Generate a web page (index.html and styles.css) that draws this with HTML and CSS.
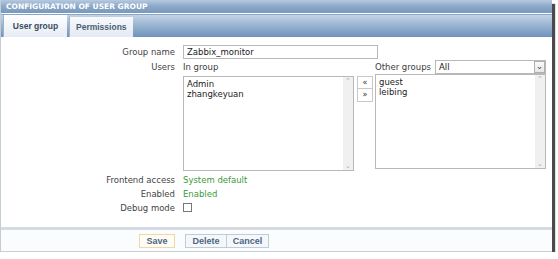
FILE: index.html
```html
<!DOCTYPE html>
<html lang="en">
<head>
    <meta charset="UTF-8">
    <title>Configuration of user group</title>
    <link rel="stylesheet" href="styles.css">
</head>
<body>
    <div class="window">
        <div class="title">CONFIGURATION OF USER GROUP</div>
        <div class="tabs">
            <div class="tab active">User group</div>
            <div class="tab">Permissions</div>
        </div>

        <div class="form">
            <div class="row">
                <div class="label">Group name</div>
                <div class="input">Zabbix_monitor</div>
            </div>

            <div class="row users-row">
                <div class="label">Users</div>
                <div class="users">
                    <div class="col">
                        <div class="col-head">In group</div>
                        <div class="listbox">
                            <div class="items">
                                <div>Admin</div>
                                <div>zhangkeyuan</div>
                            </div>
                            <div class="scroll"><span>&#8963;</span><span>&#8964;</span></div>
                        </div>
                    </div>
                    <div class="moves">
                        <div class="move">&laquo;</div>
                        <div class="move">&raquo;</div>
                    </div>
                    <div class="col">
                        <div class="col-head other">
                            <span>Other groups</span>
                            <div class="select">All<span class="arrow">&#8964;</span></div>
                        </div>
                        <div class="listbox">
                            <div class="items">
                                <div>guest</div>
                                <div>leibing</div>
                            </div>
                            <div class="scroll"><span>&#8963;</span><span>&#8964;</span></div>
                        </div>
                    </div>
                </div>
            </div>

            <div class="row">
                <div class="label">Frontend access</div>
                <div class="green">System default</div>
            </div>

            <div class="row">
                <div class="label">Enabled</div>
                <div class="green">Enabled</div>
            </div>

            <div class="row">
                <div class="label">Debug mode</div>
                <span class="checkbox"></span>
            </div>
        </div>

        <div class="footer">
            <button class="btn save">Save</button>
            <div class="group">
                <button class="btn delete">Delete</button>
                <button class="btn cancel">Cancel</button>
            </div>
        </div>
    </div>
</body>
</html>
```

FILE: styles.css
```css
* {
    box-sizing: border-box;
    margin: 0;
    padding: 0;
}

body {
    font-family: "DejaVu Sans", Verdana, sans-serif;
    font-size: 8.5px;
    color: #3c3c3c;
    background: #fff;
}

.window {
    width: 552px;
    height: 252px;
    border-left: 1px solid #c4ccd4;
    box-shadow: 3px 4px 1px #4a4a4a;
    background: #fff;
    display: flex;
    flex-direction: column;
}

.title {
    height: 14px;
    line-height: 14px;
    padding-left: 5px;
    font-weight: bold;
    font-size: 7.5px;
    color: #fff;
    background: linear-gradient(#b6c9de, #8aa8c8 50%, #7898bd);
    border-bottom: 1px solid #fff;
}

.tabs {
    height: 23px;
    display: flex;
    align-items: flex-end;
    gap: 2px;
    padding-left: 2px;
    background: linear-gradient(#c4d4e6, #9ab5d2 45%, #6f93bb);
    border-top: 1px solid #8aa5c3;
}

.tab {
    height: 20px;
    line-height: 20px;
    padding: 0 6px;
    font-family: "Liberation Sans", Arial, sans-serif;
    font-size: 8.5px;
    font-weight: bold;
    color: #4a5e74;
    background: linear-gradient(#f7f9fb, #e3eaf2);
    border-left: 1px solid #9fb4cb;
}

.tab.active {
    width: 64px;
    height: 22px;
    line-height: 22px;
    padding: 0;
    text-align: center;
    color: #3a4b5e;
    background: linear-gradient(#ffffff, #e6ecf3);
}

.form {
    flex: 1;
    padding-top: 8px;
}

.row {
    display: flex;
    align-items: center;
    height: 14px;
}

.label {
    flex: 0 0 174px;
    margin-right: 8px;
    text-align: right;
    color: #444;
    white-space: nowrap;
}

.input {
    width: 195px;
    height: 14px;
    line-height: 12px;
    padding-left: 3px;
    border: 1px solid #b8b8b8;
    color: #222;
}

.green {
    color: #3c9a3c;
}

.users-row {
    height: 114px;
    align-items: flex-start;
    padding-top: 1px;
}

.users-row .label {
    line-height: 14px;
}

.users {
    display: flex;
}

.col {
    display: flex;
    flex-direction: column;
}

.col-head {
    height: 16px;
    line-height: 14px;
    white-space: nowrap;
}

.col-head.other {
    display: flex;
    align-items: center;
    gap: 4px;
    margin-top: -1px;
    height: 16px;
    margin-bottom: -1px;
}

.select {
    flex: 1;
    height: 14px;
    line-height: 12px;
    padding-left: 3px;
    border: 1px solid #b8b8b8;
    position: relative;
    color: #222;
}

.select .arrow {
    position: absolute;
    right: 0;
    top: 0;
    width: 11px;
    height: 12px;
    line-height: 8px;
    text-align: center;
    border: 1px solid #b0b0b0;
    background: linear-gradient(#fafafa, #e4e6e8);
    font-size: 9px;
    color: #444;
}

.listbox {
    width: 171px;
    height: 95px;
    display: flex;
    border: 1px solid #b8b8b8;
    color: #222;
}

.items {
    flex: 1;
    padding: 2px 3px;
    line-height: 10px;
}

.scroll {
    width: 10px;
    background: #f0f0f0;
    display: flex;
    flex-direction: column;
    justify-content: space-between;
    align-items: center;
    font-size: 7px;
    color: #aaa;
    line-height: 8px;
}

.moves {
    padding-top: 16px;
    padding-left: 3px;
    padding-right: 2px;
}

.move {
    width: 16px;
    height: 13px;
    line-height: 11px;
    text-align: center;
    border: 1px solid #c8c8c8;
    font-size: 8px;
    color: #333;
}

.move + .move {
    border-top: none;
}

.checkbox {
    display: block;
    width: 9px;
    height: 9px;
    border: 1px solid #777;
    margin-top: -2px;
}

.footer {
    height: 25px;
    display: flex;
    align-items: center;
    gap: 10px;
    padding-left: 138px;
    border-top: 3px solid #d4dbe2;
    border-bottom: 1px solid #c8d0d8;
    background: #fbfcfd;
}

.group {
    display: flex;
}

.btn {
    font-family: "Liberation Sans", Arial, sans-serif;
    font-size: 9px;
    font-weight: bold;
    height: 14px;
    padding: 0;
    color: #4b6684;
    background: #f5f7fa;
    border: 1px solid #c0ccd8;
}

.btn.save {
    width: 36px;
    background: #fffcf4;
    border-color: #efd9a8;
}

.btn.delete {
    width: 42px;
}

.btn.cancel {
    width: 42px;
    border-left: none;
}
```
